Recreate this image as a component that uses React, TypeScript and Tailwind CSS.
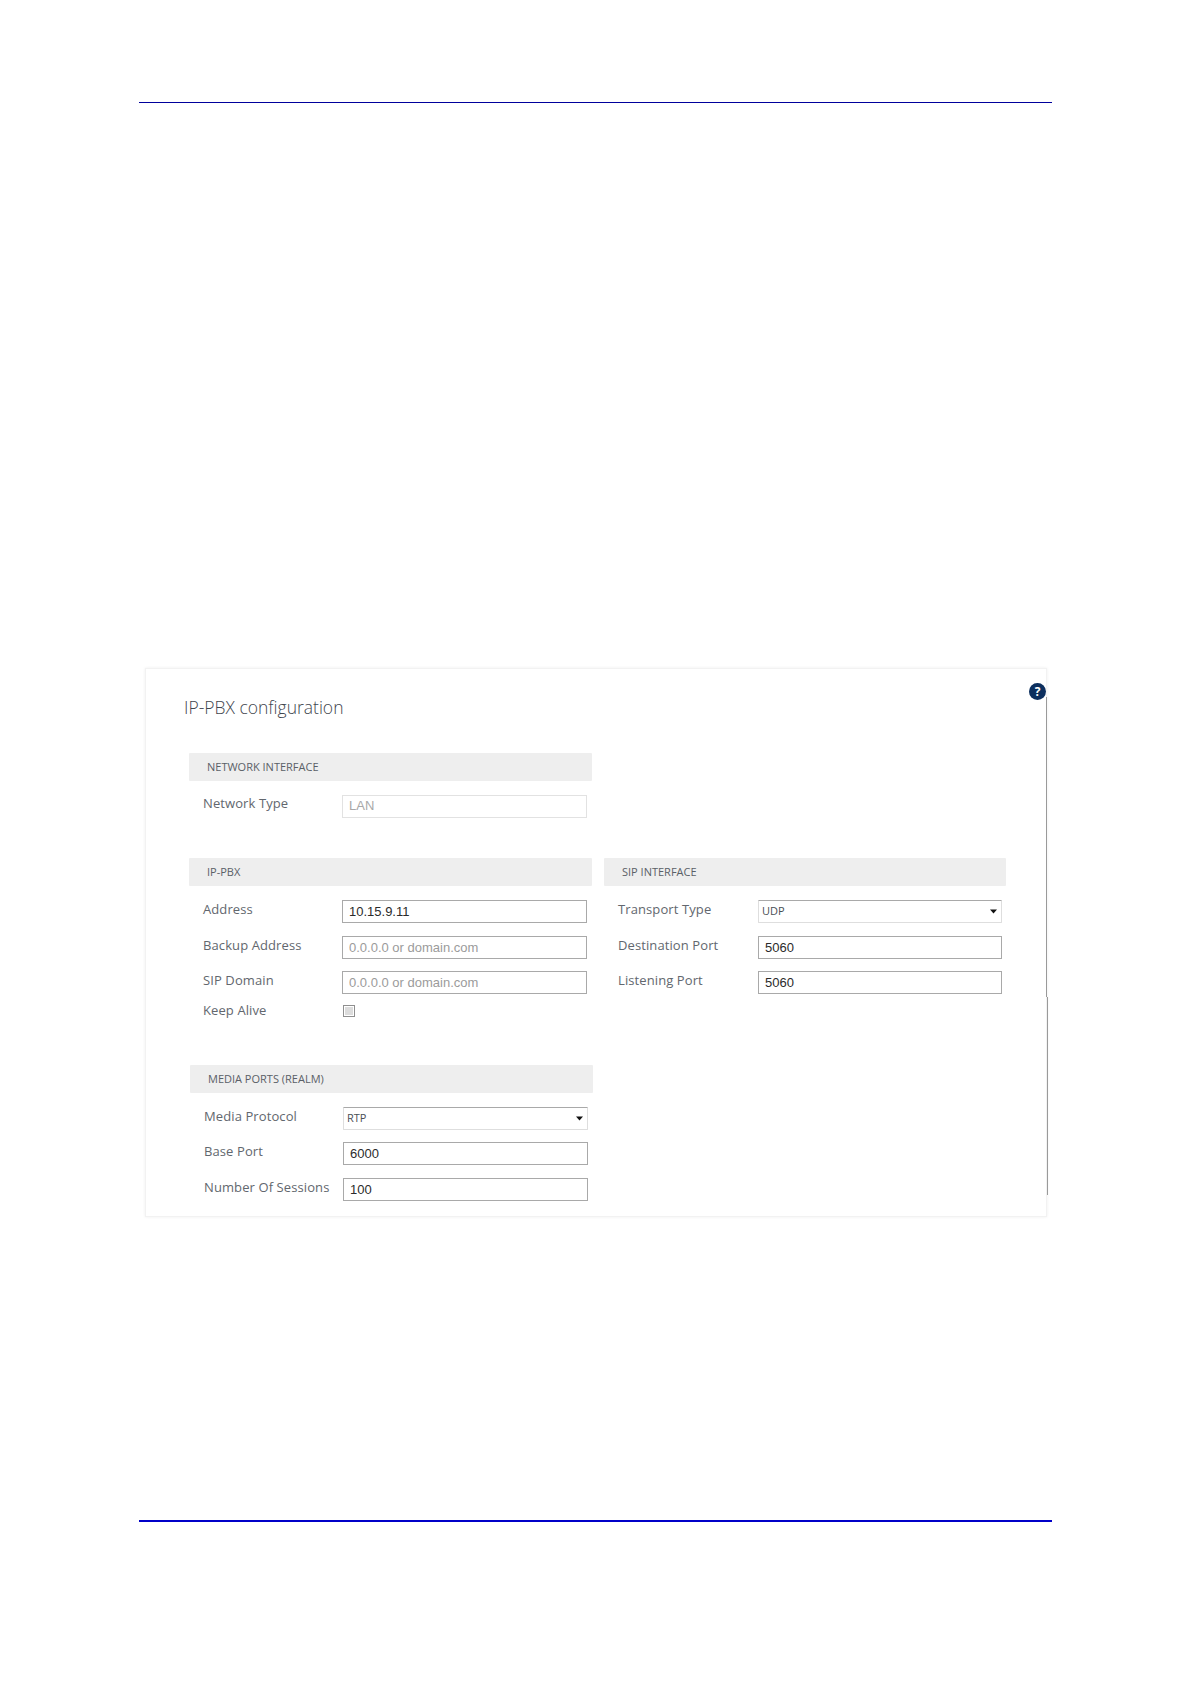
const labelFont = "font-['Open_Sans',sans-serif] text-[13px] leading-[18px] tracking-[0.1px] text-[#62676e]";
const fieldFont = "font-['Liberation_Sans',Arial,sans-serif] text-[13px]";

function SectionHeader({ title }: { title: string }) {
  return (
    <div className="flex h-[28px] items-center rounded-[1px] bg-[#eeeeee] pl-[18px] font-['Open_Sans',sans-serif] text-[11px] text-[#5a6067]">
      {title}
    </div>
  );
}

function Row({
  label,
  className = "",
  labelClass = "w-[139px]",
  children,
}: {
  label: string;
  className?: string;
  labelClass?: string;
  children: React.ReactNode;
}) {
  return (
    <div className={`flex items-start pl-[14px] ${className}`}>
      <span className={`shrink-0 ${labelClass} ${labelFont}`}>{label}</span>
      {children}
    </div>
  );
}

function TextField({
  value,
  placeholder,
  disabled,
  w = "w-[245px]",
}: {
  value?: string;
  placeholder?: string;
  disabled?: boolean;
  w?: string;
}) {
  return (
    <input
      readOnly
      disabled={disabled}
      defaultValue={value}
      placeholder={placeholder}
      className={`h-[23px] border bg-white px-[6px] outline-none placeholder:text-[#9b9b9b] ${w} ${fieldFont} ${
        disabled ? "border-[#e2e2e2] pb-[2px] text-[#a8a8a8]" : "border-[#a9a9a9] text-[#2b2b2b]"
      }`}
    />
  );
}

function SelectField({ value, w = "w-[245px]" }: { value: string; w?: string }) {
  return (
    <div className={`flex h-[23px] items-center justify-between rounded-[1px] border border-[#dedede] border-t-[#a9a9a9] bg-white pl-[3px] pr-[4px] ${w}`}>
      <span className="font-['Open_Sans',sans-serif] text-[11px] text-[#4a4f55]">{value}</span>
      <svg width="7" height="5" viewBox="0 0 7 5" aria-hidden="true">
        <polygon points="0,0.5 7,0.5 3.5,4.5" fill="#111111" />
      </svg>
    </div>
  );
}

export default function App() {
  return (
    <main className="relative flex h-[1683px] w-[1191px] flex-col overflow-hidden bg-white">
      <div className="mx-[139px] mt-[102px] h-[1px] bg-[#00009c]" />

      <section className="relative ml-[145px] mt-[565px] h-[549px] w-[902px] border border-[#f2f2f2] pt-[26px] shadow-[0_0_3px_#eeeeee]">
        <h1 className="pl-[38px] font-['Open_Sans',sans-serif] text-[17.5px] font-light leading-[24px] text-[#3f464e]">
          IP-PBX configuration
        </h1>
        <span className="absolute left-[883px] top-[14px] flex h-[17px] w-[17px] items-center justify-center rounded-full bg-[#0c2f5e] font-['Open_Sans',sans-serif] text-[12px] font-bold text-white">
          ?
        </span>
        <span className="absolute left-[900px] top-[28px] h-[300px] w-[1px] bg-[#9a9a9a]" />
        <span className="absolute left-[901px] top-[328px] h-[198px] w-[1px] bg-[#9a9a9a]" />

        <div className="ml-[43px] mt-[34px] w-[403px]">
          <SectionHeader title="NETWORK INTERFACE" />
          <Row label="Network Type" labelClass="w-[139px] -mt-[1px]" className="mt-[14px]">
            <TextField value="LAN" disabled />
          </Row>
        </div>

        <div className="ml-[43px] mt-[40px] flex gap-[12px]">
          <div className="w-[403px]">
            <SectionHeader title="IP-PBX" />
            <Row label="Address" className="mt-[14px]">
              <TextField value="10.15.9.11" />
            </Row>
            <Row label="Backup Address" className="mt-[13px]">
              <TextField placeholder="0.0.0.0 or domain.com" />
            </Row>
            <Row label="SIP Domain" className="mt-[12px]">
              <TextField placeholder="0.0.0.0 or domain.com" />
            </Row>
            <Row label="Keep Alive" className="mt-[7px]">
              <span className="ml-[1px] mt-[4px] flex h-[12px] w-[12px] items-center justify-center border border-[#8f8f8f] bg-white">
                <span className="h-[8px] w-[8px] bg-[#dcdcdc]" />
              </span>
            </Row>
          </div>
          <div className="w-[402px]">
            <SectionHeader title="SIP INTERFACE" />
            <Row label="Transport Type" labelClass="w-[140px]" className="mt-[14px]">
              <SelectField value="UDP" w="w-[244px]" />
            </Row>
            <Row label="Destination Port" labelClass="w-[140px]" className="mt-[13px]">
              <TextField value="5060" w="w-[244px]" />
            </Row>
            <Row label="Listening Port" labelClass="w-[140px]" className="mt-[12px]">
              <TextField value="5060" w="w-[244px]" />
            </Row>
          </div>
        </div>

        <div className="ml-[44px] mt-[46px] w-[403px]">
          <SectionHeader title="MEDIA PORTS (REALM)" />
          <Row label="Media Protocol" className="mt-[14px]">
            <SelectField value="RTP" />
          </Row>
          <Row label="Base Port" className="mt-[12px]">
            <TextField value="6000" />
          </Row>
          <Row label="Number Of Sessions" className="mt-[13px]">
            <TextField value="100" />
          </Row>
        </div>
      </section>

      <div className="mx-[139px] mt-[303px] h-[2px] bg-[#0000c8]" />
    </main>
  );
}
